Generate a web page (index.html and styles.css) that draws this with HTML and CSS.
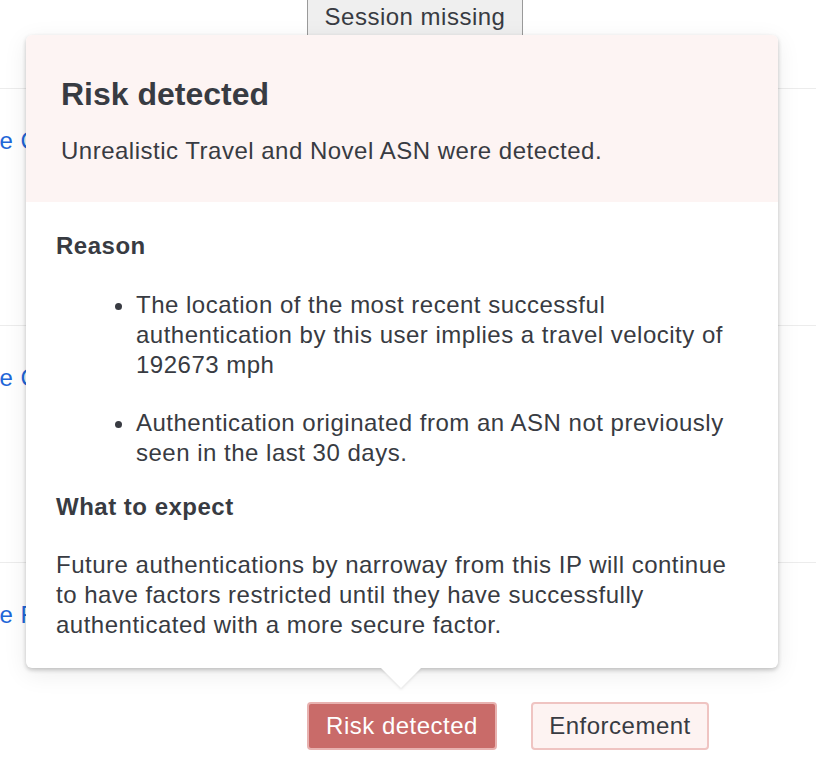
FILE: index.html
```html
<!DOCTYPE html>
<html lang="en">

<head>
    <meta charset="UTF-8">
    <meta name="viewport" content="width=device-width, initial-scale=1.0">
    <link rel="stylesheet" href="styles.css">
    <title>Risk detected</title>
</head>

<body>
    <div class="pagina">
        <!-- Filas de la tabla de fondo -->
        <div class="filas">
            <div class="fila"><a class="enlace" href="#">Device Co</a></div>
            <div class="fila"><a class="enlace" href="#">Device Co</a></div>
            <div class="fila"><a class="enlace" href="#">Device Fa</a></div>
        </div>

        <!-- Etiqueta superior -->
        <span class="etiqueta-sesion">Session missing</span>

        <!-- Botones de estado -->
        <div class="botones">
            <button class="boton boton-riesgo">Risk detected</button>
            <button class="boton boton-control">Enforcement</button>
        </div>

        <!-- Ventana emergente con la explicación del riesgo -->
        <div class="popover">
            <div class="popover-cabecera">
                <h2 class="popover-titulo">Risk detected</h2>
                <p class="popover-resumen">Unrealistic Travel and Novel ASN were detected.</p>
            </div>
            <div class="popover-cuerpo">
                <h3 class="seccion">Reason</h3>
                <ul class="razones">
                    <li>The location of the most recent successful authentication by this user implies a travel velocity of 192673 mph</li>
                    <li>Authentication originated from an ASN not previously seen in the last 30 days.</li>
                </ul>
                <h3 class="seccion">What to expect</h3>
                <p class="expectativa">Future authentications by narroway from this IP will continue to have factors restricted until they have successfully authenticated with a more secure factor.</p>
            </div>
            <span class="flecha"></span>
        </div>
    </div>
</body>

</html>
```

FILE: styles.css
```css
body {
    margin: 0px;
    background-color: #fff;
    font-family: "Liberation Sans", Arial, sans-serif;
    letter-spacing: 0.5px;
    color: #383b42;
    overflow: hidden;
}

.pagina {
    position: relative;
    width: 816px;
    height: 782px;
    overflow: hidden;
}

.filas {
    padding-top: 88px;
}

.fila {
    height: 237px;
    border-top: 1px solid #ececec;
    box-sizing: border-box;
    padding-top: 38px;
    margin-left: -63px;
}

.enlace {
    color: #2166d8;
    font-size: 24px;
    text-decoration: none;
}

.etiqueta-sesion {
    position: absolute;
    top: -12px;
    left: 307px;
    width: 216px;
    height: 48px;
    box-sizing: border-box;
    padding-top: 14px;
    text-align: center;
    font-size: 24px;
    background-color: #efefef;
    border: 1px solid #9a9a9a;
    color: #383b42;
}

.botones {
    position: absolute;
    top: 702px;
    left: 307px;
    display: flex;
    gap: 34px;
}

.boton {
    height: 48px;
    padding: 0px;
    font-family: "Liberation Sans", Arial, sans-serif;
    font-size: 24px;
    letter-spacing: 0.5px;
    border-radius: 4px;
    border: 2px solid #efc4c2;
}

.boton-riesgo {
    width: 190px;
    background-color: #c96b69;
    color: #fff;
    border-color: #e8b2b0;
}

.boton-control {
    width: 178px;
    background-color: #fdf3f2;
    color: #383b42;
}

.popover {
    position: absolute;
    top: 35px;
    left: 26px;
    width: 752px;
    height: 633px;
    background-color: #fff;
    border-radius: 6px;
    box-shadow: 0px 2px 4px rgba(0, 0, 0, 0.22), 0px 6px 24px rgba(0, 0, 0, 0.08);
}

.popover-cabecera {
    height: 167px;
    box-sizing: border-box;
    padding: 40px 35px 0px 35px;
    background-color: #fdf4f3;
    border-radius: 6px 6px 0px 0px;
}

.popover-titulo {
    margin: 0px;
    font-size: 32px;
    font-weight: bold;
    letter-spacing: 0px;
    line-height: 38px;
}

.popover-resumen {
    margin: 23px 0px 0px 0px;
    font-size: 24px;
    line-height: 30px;
}

.popover-cuerpo {
    padding: 29px 26px 0px 30px;
    font-size: 24px;
    line-height: 30px;
}

.seccion {
    margin: 0px;
    font-size: 24px;
    font-weight: bold;
    line-height: 30px;
}

.razones {
    margin: 29px 0px 24px 0px;
    padding-left: 80px;
}

.razones li {
    margin-bottom: 28px;
}

.razones li:last-child {
    margin-bottom: 0px;
}

.expectativa {
    margin: 28px 0px 0px 0px;
}

.flecha {
    position: absolute;
    left: 355px;
    bottom: -20px;
    width: 0px;
    height: 0px;
    border-left: 20px solid transparent;
    border-right: 20px solid transparent;
    border-top: 20px solid #fff;
    filter: drop-shadow(0px 2px 1px rgba(0, 0, 0, 0.08));
}
```
